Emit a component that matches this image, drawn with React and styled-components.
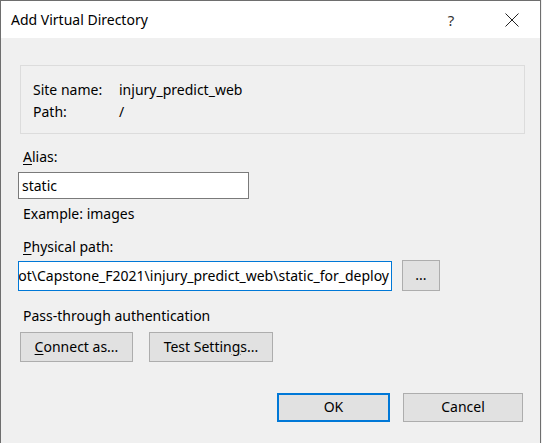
import React from 'react'
import styled, { createGlobalStyle } from 'styled-components'

const GlobalStyle = createGlobalStyle`
  html, body {
    margin: 0;
    padding: 0;
    background: #f0f0f0;
  }
  body {
    font-family: "Noto Sans", "Open Sans", sans-serif;
    font-size: 14px;
    color: #000;
  }
`

const Window = styled.div`
  width: 541px;
  height: 443px;
  box-sizing: border-box;
  border: 1px solid #6e6e6e;
  border-bottom: none;
  background: #f0f0f0;
  display: flex;
  flex-direction: column;
`

const TitleBar = styled.div`
  height: 37px;
  background: #fff;
  display: flex;
  align-items: center;
  padding-left: 10px;
  padding-right: 21px;
`

const Title = styled.div`
  flex: 1;
  font-size: 14px;
  color: #000;
  padding-bottom: 1px;
`

const CaptionButton = styled.div`
  width: ${(p) => p.w}px;
  display: flex;
  justify-content: center;
  align-items: center;
  color: #333;
  font-size: 15px;
`

const Body = styled.div`
  flex: 1;
  display: flex;
  flex-direction: column;
  padding: 27px 17px 0 17px;
`

const GroupBox = styled.div`
  margin-left: 2px;
  width: 505px;
  box-sizing: border-box;
  height: 69px;
  border: 1px solid #dcdcdc;
  padding: 13px 0 0 12px;
  display: grid;
  grid-template-columns: 86px 1fr;
  grid-auto-rows: 22px;
  line-height: 22px;
`

const Label = styled.div`
  line-height: 20px;
  padding-left: 5px;
  margin-top: ${(p) => p.mt || 0}px;
`

const Key = styled.span`
  text-decoration: underline;
  text-underline-offset: 2px;
`

const TextBox = styled.div`
  box-sizing: border-box;
  width: ${(p) => p.w}px;
  height: ${(p) => p.h}px;
  margin-top: ${(p) => p.mt || 0}px;
  background: #fff;
  border: 1px solid ${(p) => (p.focused ? '#0078d7' : '#7a7a7a')};
  display: flex;
  align-items: center;
  justify-content: ${(p) => (p.scrolled ? 'flex-end' : 'flex-start')};
  padding: 0 2px 1px 3px;
  overflow: hidden;
  white-space: nowrap;
`

const PathRow = styled.div`
  display: flex;
  align-items: center;
  gap: 10px;
  margin-top: 3px;
`

const Button = styled.button`
  box-sizing: border-box;
  width: ${(p) => p.w}px;
  height: ${(p) => p.h || 30}px;
  background: #e1e1e1;
  border: ${(p) => (p.primary ? '2px solid #0078d7' : '1px solid #adadad')};
  font-family: inherit;
  font-size: 14px;
  color: #000;
  padding: 0 0 2px;
  margin: 0;
  cursor: default;
`

const ButtonRow = styled.div`
  display: flex;
  gap: ${(p) => p.gap}px;
  margin-top: ${(p) => p.mt}px;
  justify-content: ${(p) => (p.end ? 'flex-end' : 'flex-start')};
  margin-left: ${(p) => (p.end ? 0 : 2)}px;
`

const CloseIcon = () => (
  <svg width="14" height="14" viewBox="0 0 14 14">
    <path d="M0.5 0.5 L13.5 13.5 M13.5 0.5 L0.5 13.5" stroke="#222" strokeWidth="1" />
  </svg>
)

export default function App() {
  return (
    <>
      <GlobalStyle />
      <Window>
        <TitleBar>
          <Title>Add Virtual Directory</Title>
          <CaptionButton w={14}>?</CaptionButton>
          <CaptionButton w={47}></CaptionButton>
          <CaptionButton w={14}>
            <CloseIcon />
          </CaptionButton>
        </TitleBar>
        <Body>
          <GroupBox>
            <div>Site name:</div>
            <div>injury_predict_web</div>
            <div>Path:</div>
            <div>/</div>
          </GroupBox>

          <Label mt={13}>
            <Key>A</Key>lias:
          </Label>
          <TextBox w={231} h={27} mt={5}>
            static
          </TextBox>
          <Label mt={5}>Example: images</Label>

          <Label mt={13}>
            <Key>P</Key>hysical path:
          </Label>
          <PathRow>
            <TextBox w={374} h={30} focused scrolled>
              C:\inetpub\wwwroot\Capstone_F2021\injury_predict_web\static_for_deploy
            </TextBox>
            <Button w={38} h={31}>
              ...
            </Button>
          </PathRow>

          <Label mt={15}>Pass-through authentication</Label>
          <ButtonRow gap={16} mt={6}>
            <Button w={113}>
              <Key>C</Key>onnect as...
            </Button>
            <Button w={124}>
              Test Settin<Key>g</Key>s...
            </Button>
          </ButtonRow>

          <ButtonRow end gap={13} mt={31}>
            <Button w={113} h={29} primary>
              OK
            </Button>
            <Button w={120} h={29}>
              Cancel
            </Button>
          </ButtonRow>
        </Body>
      </Window>
    </>
  )
}
